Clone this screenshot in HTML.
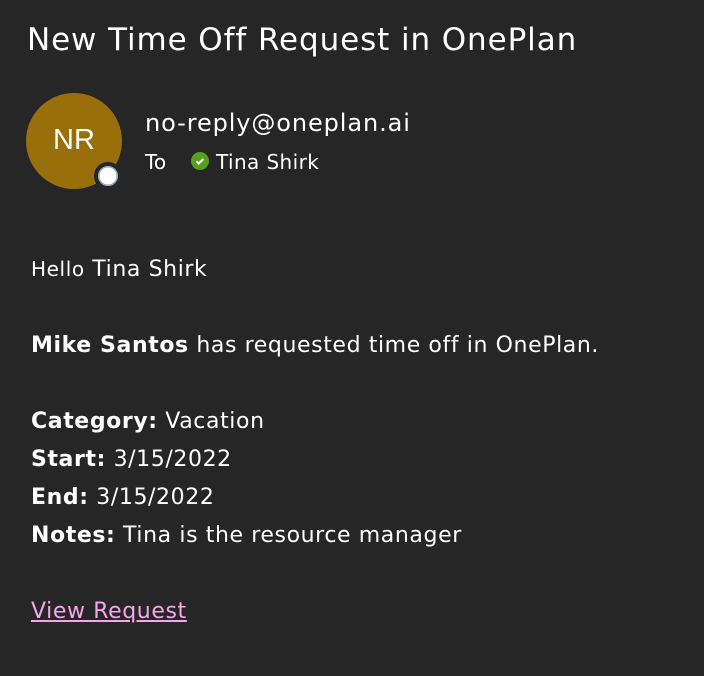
<!DOCTYPE html>
<html><head><style>
body{margin:0;background:#262626;width:704px;height:676px;overflow:hidden;font-family:"DejaVu Sans",sans-serif;color:#fff;position:relative}
.a{position:absolute;white-space:nowrap}
</style></head><body>
<div class="a" style="left:27px;top:22px;font-size:31px;letter-spacing:0.9px">New Time Off Request in OnePlan</div>
<div class="a" style="left:26px;top:93px;width:96px;height:96px;border-radius:50%;background:#986f0b"></div>
<div class="a" style="left:26px;top:124px;width:96px;text-align:center;font-size:29px;font-family:'Liberation Sans',sans-serif">NR</div>
<div class="a" style="left:94px;top:162px;width:20px;height:20px;border-radius:50%;background:#fff;border:4px solid #262626;box-shadow:inset 0 0 0 1.5px #9ab"></div>
<div class="a" style="left:145px;top:109px;font-size:24px;letter-spacing:0.9px">no-reply@oneplan.ai</div>
<div class="a" style="left:145px;top:150px;font-size:20px">To</div>
<div class="a" style="left:191px;top:152px;width:18px;height:18px;border-radius:50%;background:#57a01b"></div>
<svg class="a" style="left:191px;top:152px" width="18" height="18"><path d="M5.5 9.3l2.3 2.2 4.5-4.6" stroke="#fff" stroke-width="2" fill="none"/></svg>
<div class="a" style="left:216px;top:150px;font-size:20px;letter-spacing:0.4px">Tina Shirk</div>
<div style="position:absolute;left:31px;top:250px;font-size:22px;line-height:38px;letter-spacing:0.6px">
<div><span style="font-size:20px">Hello</span> Tina Shirk</div>
<div style="height:38px"></div>
<div><b>Mike Santos</b> has requested time off in OnePlan.</div>
<div style="height:38px"></div>
<div><b>Category:</b> Vacation</div>
<div><b>Start:</b> 3/15/2022</div>
<div><b>End:</b> 3/15/2022</div>
<div><b>Notes:</b> Tina is the resource manager</div>
<div style="height:38px"></div>
<div style="color:#f7a6ee;text-decoration:underline">View Request</div>
</div>
</body></html>
